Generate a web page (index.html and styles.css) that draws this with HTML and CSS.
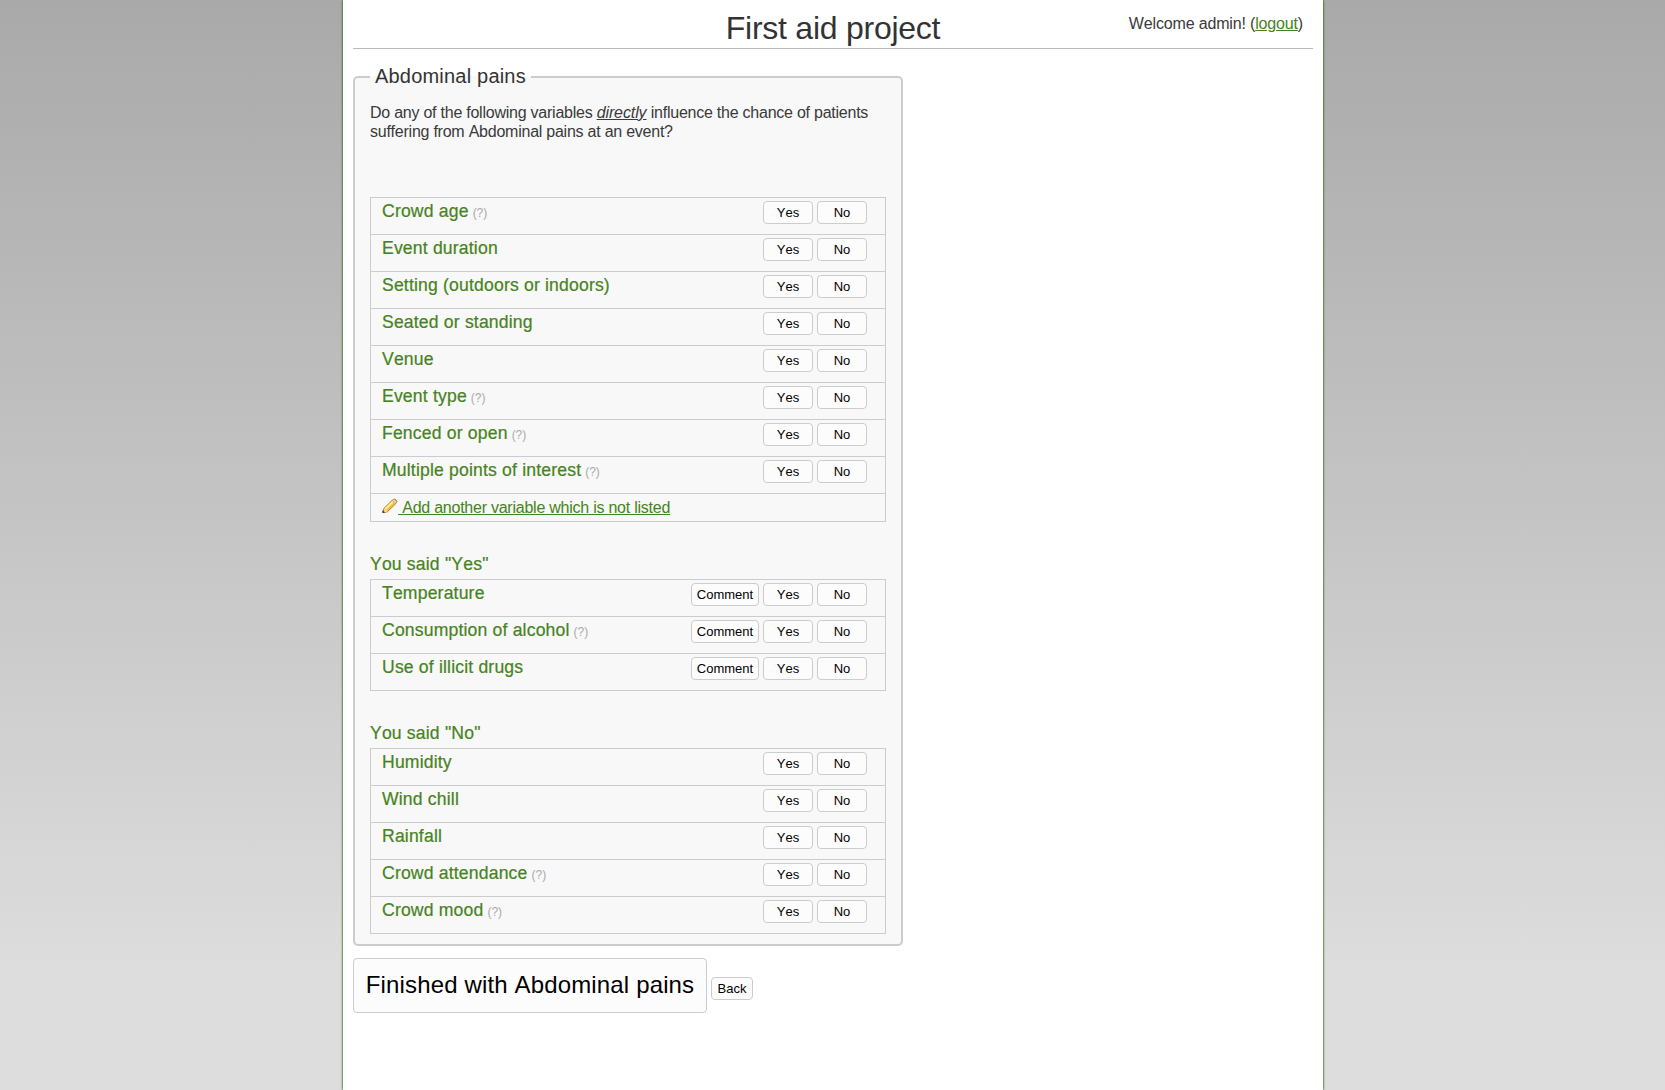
FILE: index.html
```html
<!DOCTYPE html>
<html lang="en">
<head>
<meta charset="utf-8">
<title>First aid project</title>
<link rel="stylesheet" href="styles.css">
</head>
<body>
<div class="page">
  <header class="header">
    <h1>First aid project</h1>
    <div class="user">Welcome admin! (<a href="#">logout</a>)</div>
  </header>
  <fieldset class="panel">
    <legend>Abdominal pains</legend>
    <p class="intro">Do any of the following variables <em>directly</em> influence the chance of patients<br>suffering from Abdominal pains at an event?</p>
    <ul class="list">
      <li><span class="name">Crowd age</span><span class="hint">(?)</span><span class="actions"><button>Yes</button><button>No</button></span></li>
      <li><span class="name">Event duration</span><span class="actions"><button>Yes</button><button>No</button></span></li>
      <li><span class="name">Setting (outdoors or indoors)</span><span class="actions"><button>Yes</button><button>No</button></span></li>
      <li><span class="name">Seated or standing</span><span class="actions"><button>Yes</button><button>No</button></span></li>
      <li><span class="name">Venue</span><span class="actions"><button>Yes</button><button>No</button></span></li>
      <li><span class="name">Event type</span><span class="hint">(?)</span><span class="actions"><button>Yes</button><button>No</button></span></li>
      <li><span class="name">Fenced or open</span><span class="hint">(?)</span><span class="actions"><button>Yes</button><button>No</button></span></li>
      <li><span class="name">Multiple points of interest</span><span class="hint">(?)</span><span class="actions"><button>Yes</button><button>No</button></span></li>
      <li class="add"><svg class="pencil" width="16" height="16" viewBox="0 0 16 16"><path d="M.8 14.5 2 10.4 10.6 1.8Q12.3.3 14 1.9 15.7 3.600 14.1 5.300L5.300 13.900Z" fill="#f7d654" stroke="#b87528"/><path d="M3.300 11 11 3.300" stroke="#fff3a8" stroke-width="1.500"/><path d="m5 12.500 7.500-7.500" stroke="#e5ae32"/><path d="m10.300 2.600 1-.9Q12.500 1 13.700 2.200 15 3.500 14 4.900l-.8.9Z" fill="#f2cfaa" stroke="#d28c55" stroke-width=".7"/><path d="m2 10.700 3.200 3-2.500.8Z" fill="#f4dcb5"/><path d="M.5 15v-2.800l2.700 2.200Z" fill="#4c2e16"/></svg><a href="#">&nbsp;Add another variable which is not listed</a></li>
    </ul>
    <h2>You said "Yes"</h2>
    <ul class="list">
      <li><span class="name">Temperature</span><span class="actions"><button class="comment">Comment</button><button>Yes</button><button>No</button></span></li>
      <li><span class="name">Consumption of alcohol</span><span class="hint">(?)</span><span class="actions"><button class="comment">Comment</button><button>Yes</button><button>No</button></span></li>
      <li><span class="name">Use of illicit drugs</span><span class="actions"><button class="comment">Comment</button><button>Yes</button><button>No</button></span></li>
    </ul>
    <h2>You said "No"</h2>
    <ul class="list">
      <li><span class="name">Humidity</span><span class="actions"><button>Yes</button><button>No</button></span></li>
      <li><span class="name">Wind chill</span><span class="actions"><button>Yes</button><button>No</button></span></li>
      <li><span class="name">Rainfall</span><span class="actions"><button>Yes</button><button>No</button></span></li>
      <li><span class="name">Crowd attendance</span><span class="hint">(?)</span><span class="actions"><button>Yes</button><button>No</button></span></li>
      <li><span class="name">Crowd mood</span><span class="hint">(?)</span><span class="actions"><button>Yes</button><button>No</button></span></li>
    </ul>
  </fieldset>
  <div class="footer"><button class="finish">Finished with Abdominal pains</button><button class="back">Back</button></div>
</div>
</body>
</html>
```
FILE: styles.css
```css
* { box-sizing: border-box; }
body {
  margin: 0;
  min-height: 1090px;
  background: linear-gradient(#a9a9a9, #ddd 970px) #ddd;
  color: #3a3a3a;
  font: 16px/19px "Liberation Sans", Arial, sans-serif;
  font-kerning: none;
  letter-spacing: -0.24px;
}
.page {
  width: 980px;
  height: 1090px;
  margin-left: 343px;
  padding: 0 10px;
  background: #fff;
  box-shadow: 0 0 2px #2d6512, 0 0 2px #2d6512;
}
.header {
  display: grid;
  grid-template-columns: 1fr auto 1fr;
  height: 49px;
  border-bottom: 1px solid #bbb;
}
h1 {
  grid-column: 2;
  margin: 10px 0 0;
  color: #333;
  font-size: 32px;
  font-weight: 400;
  line-height: 37px;
  letter-spacing: -0.25px;
}
.user { padding: 14px 10px 0 0; text-align: right; letter-spacing: -0.16px; }
a { color: #468321; }
em { text-decoration: underline; letter-spacing: -0.1px; }
.panel {
  width: 550px;
  height: 880px;
  margin: 17px 0 0;
  padding: 0 15px;
  border: 2px solid #ccc;
  border-radius: 5px;
  background: #f8f8f8;
}
legend {
  height: 22px;
  padding: 0 5px;
  color: #333;
  font-size: 20px;
  line-height: 20px;
  letter-spacing: 0.2px;
}
.intro { height: 109px; margin: 0; padding-top: 15px; white-space: nowrap; }
.list {
  margin: 0;
  padding: 0;
  border: 1px solid #ccc;
  list-style: none;
}
.list li {
  display: flex;
  height: 37px;
  padding: 3px 18px 0 11px;
  border-bottom: 1px solid #ccc;
}
.list li:last-child { height: 36px; border-bottom: 0; }
.list li.add { height: 27px; padding-top: 4px; }
.name, h2 {
  color: #468321;
  font-size: 17.6px;
  font-weight: 400;
  line-height: 21px;
  letter-spacing: 0.17px;
  -webkit-text-stroke: 0.2px #468321;
}
.hint { margin: 3px 0 0 4px; color: #aaa; font-size: 12px; letter-spacing: 0; }
.actions { display: flex; gap: 4px; margin-left: auto; }
button {
  width: 50px;
  height: 23px;
  padding: 0;
  border: 1px solid #ccc;
  border-radius: 4px;
  background: #fcfcfc;
  color: #000;
  font: 13px "Liberation Sans", Arial, sans-serif;
  font-kerning: none;
}
.comment { width: 68px; }
.pencil { flex: none; fill: none; }
h2 { height: 57px; margin: 0; padding-top: 32px; }
.footer { display: flex; gap: 4px; margin-top: 12px; }
.finish { width: 354px; height: 55px; padding-bottom: 2px; font-size: 24px; letter-spacing: 0.15px; }
.back { width: 42px; margin-top: 19px; }
```
